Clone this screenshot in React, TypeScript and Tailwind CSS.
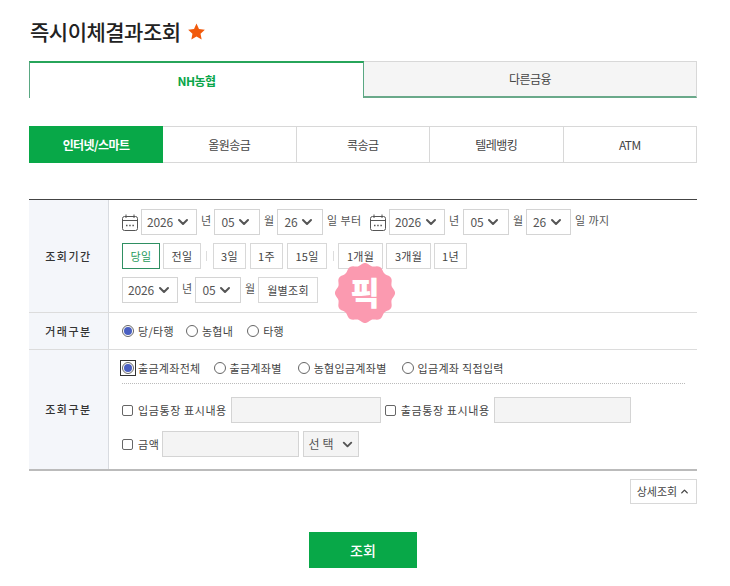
import { ChevronDown, ChevronUp } from "lucide-react";

const font = { fontFamily: '"Noto Sans CJK KR", "Noto Sans", sans-serif' };

function badgePath() {
  // scalloped sticker outline
  const pts: string[] = [];
  for (let i = 0; i < 120; i++) {
    const a = (i / 120) * Math.PI * 2;
    const r = 28.8 + 1.3 * Math.cos(a * 12);
    pts.push(`${(30 + r * Math.cos(a)).toFixed(2)},${(30 + r * Math.sin(a)).toFixed(2)}`);
  }
  return `M${pts.join("L")}Z`;
}

function Calendar() {
  return (
    <svg width="16" height="17" viewBox="0 0 16 17" fill="none" stroke="#555" strokeWidth="1" className="shrink-0">
      <rect x="0.5" y="2.5" width="15" height="14" rx="2" />
      <path d="M0.5 6.5H15.5M4 0.5V4M12 0.5V4" />
      <path d="M4 11.5H5.5M7.2 11.5H8.7M10.4 11.5H11.9" strokeWidth="1.3" />
    </svg>
  );
}

function Select({ value, w }: { value: string; w: string }) {
  return (
    <div className={`${w} h-[26px] shrink-0 border border-[#d4d4d4] flex items-center justify-center gap-[2px] text-[12px] text-[#555] tracking-[-0.2px]`}>
      <span>{value}</span>
      <ChevronDown size={16} strokeWidth={3} className="text-[#555]" />
    </div>
  );
}

function Unit({ children, w }: { children: string; w: string }) {
  return <span className={`${w} shrink-0 pl-[4px] text-left text-[11px] text-[#555] tracking-[0.4px] -mt-[3px]`}>{children}</span>;
}

function Btn({ children, w, on }: { children: string; w: string; on?: boolean }) {
  return (
    <div
      className={`${w} h-[26px] shrink-0 flex items-center justify-center border text-[11px] tracking-[0.3px] ${
        on ? "border-[#2f8f62] text-[#1f9a5c]" : "border-[#d8d8d8] text-[#444]"
      }`}
    >
      {children}
    </div>
  );
}

function Sep() {
  return <div className="w-px h-[10px] bg-[#ddd] shrink-0" />;
}

function Radio({ label, on, focus, ml }: { label: string; on?: boolean; focus?: boolean; ml?: string }) {
  return (
    <div className={`flex items-center ${ml ?? ""}`}>
      <div className={`w-[16px] h-[16px] flex items-center justify-center shrink-0 -mx-[2px] ${focus ? "border border-[#333]" : ""}`}>
        <div className="w-[12px] h-[12px] rounded-full border border-[#666] bg-white flex items-center justify-center">
          {on && <div className="w-[8px] h-[8px] rounded-full bg-[#4a5fc1]" />}
        </div>
      </div>
      <span className="ml-[4px] text-[11px] text-[#444] tracking-[0.3px] whitespace-nowrap">{label}</span>
    </div>
  );
}

function Check({ label, ml }: { label: string; ml?: string }) {
  return (
    <div className={`flex items-center shrink-0 ${ml ?? ""}`}>
      <div className="w-[11px] h-[11px] rounded-[2px] border border-[#666] bg-white shrink-0" />
      <span className="ml-[5px] text-[11px] text-[#444] tracking-[0.6px] whitespace-nowrap">{label}</span>
    </div>
  );
}

function Field({ w, ml }: { w: string; ml: string }) {
  return <div className={`${w} ${ml} h-[26px] shrink-0 border border-[#d4d4d4] bg-[#f4f4f4]`} />;
}

function RowHead({ children }: { children: string }) {
  return (
    <div className="w-[80px] shrink-0 bg-[#f4f6fa] border-r border-[#d8dbe0] flex items-center justify-center text-[11px] font-medium text-[#333] tracking-[1.5px]">
      {children}
    </div>
  );
}

export default function App() {
  const subTabs = ["올원송금", "콕송금", "텔레뱅킹", "ATM"];

  return (
    <div className="w-[730px] h-[586px] bg-white pl-[29px] pr-[33px] overflow-hidden" style={font}>
      {/* title */}
      <div className="h-[61px] flex items-center pl-px gap-[7px] pt-[1px]">
        <h1 className="text-[21px] font-medium text-[#222] tracking-[-0.5px] leading-none">즉시이체결과조회</h1>
        <svg width="17" height="17" viewBox="0 0 24 24" fill="#f15a0c">
          <path d="M12 0.8l3.5 7.6 8.3 1-6.1 5.7 1.6 8.2L12 19.2l-7.3 4.1 1.6-8.2L0.2 9.4l8.3-1z" />
        </svg>
      </div>

      {/* bank tabs */}
      <div className="flex h-[37px] text-[12px]">
        <div className="w-[335px] border-t-2 border-x border-t-[#27a55a] border-x-[#5aa883] flex items-center justify-center font-bold text-[#0aa64a] tracking-[-0.6px]">
          NH농협
        </div>
        <div className="flex-1 bg-[#f5f5f5] border-t border-r border-[#d8d8d8] border-b-2 border-b-[#6aa98a] flex items-center justify-center text-[#444] tracking-[-0.6px]">
          다른금융
        </div>
      </div>

      {/* transfer type tabs */}
      <div className="flex h-[37px] mt-[28px] text-[12px] tracking-[-0.6px] border-y border-r border-[#d8d8d8]">
        <div className="w-[134px] -my-px bg-[#08a848] flex items-center justify-center font-bold text-white">인터넷/스마트</div>
        {subTabs.map((t, i) => (
          <div key={t} className={`flex-1 flex items-center justify-center text-[#444] ${i > 0 ? "border-l border-[#d8d8d8]" : ""}`}>
            {t}
          </div>
        ))}
      </div>

      {/* search table */}
      <div className="mt-[36px] border-t border-[#444] border-b-2 border-b-[#bbb]">
        <div className="flex h-[113px] border-b border-[#dcdcdc]">
          <RowHead>조회기간</RowHead>
          <div className="relative flex-1 pl-[13px] pt-[9px] flex flex-col gap-[8px]">
            <div className="flex items-center h-[26px]">
              <Calendar />
              <div className="w-[3px]" />
              <Select value="2026" w="w-[56px]" />
              <Unit w="w-[17px]">년</Unit>
              <Select value="05" w="w-[46px]" />
              <Unit w="w-[17px]">월</Unit>
              <Select value="26" w="w-[46px]" />
              <Unit w="w-[47px]">일 부터</Unit>
              <Calendar />
              <div className="w-[3px]" />
              <Select value="2026" w="w-[56px]" />
              <Unit w="w-[18px]">년</Unit>
              <Select value="05" w="w-[46px]" />
              <Unit w="w-[17px]">월</Unit>
              <Select value="26" w="w-[45px]" />
              <Unit w="w-[44px]">일 까지</Unit>
            </div>
            <div className="flex items-center h-[26px]">
              <Btn w="w-[38px]" on>당일</Btn>
              <div className="w-[3px]" />
              <Btn w="w-[38px]">전일</Btn>
              <div className="w-[5px]" />
              <Sep />
              <div className="w-[6px]" />
              <Btn w="w-[33px]">3일</Btn>
              <div className="w-[4px]" />
              <Btn w="w-[33px]">1주</Btn>
              <div className="w-[4px]" />
              <Btn w="w-[40px]">15일</Btn>
              <div className="w-[6px]" />
              <Sep />
              <div className="w-[4px]" />
              <Btn w="w-[45px]">1개월</Btn>
              <div className="w-[3px]" />
              <Btn w="w-[45px]">3개월</Btn>
              <div className="w-[3px]" />
              <Btn w="w-[33px]">1년</Btn>
            </div>
            <div className="flex items-center h-[26px]">
              <Select value="2026" w="w-[56px]" />
              <Unit w="w-[17px]">년</Unit>
              <Select value="05" w="w-[46px]" />
              <Unit w="w-[17px]">월</Unit>
              <Btn w="w-[60px]">월별조회</Btn>
            </div>
            {/* sticker */}
            <div className="absolute left-[226px] top-[63px] w-[60px] h-[60px] flex items-center justify-center">
              <svg width="60" height="60" viewBox="0 0 60 60" className="absolute inset-0">
                <path d={badgePath()} fill="#fb9ab0" />
              </svg>
              <span className="relative -top-[2px] text-[32px] font-black text-white leading-none">픽</span>
            </div>
          </div>
        </div>

        <div className="flex h-[37px] border-b border-[#dcdcdc]">
          <RowHead>거래구분</RowHead>
          <div className="flex-1 pl-[13px] flex items-center">
            <Radio label="당/타행" on />
            <Radio label="농협내" ml="ml-[12px]" />
            <Radio label="타행" ml="ml-[14px]" />
          </div>
        </div>

        <div className="flex h-[119px]">
          <RowHead>조회구분</RowHead>
          <div className="flex-1 pl-[13px] pr-[12px]">
            <div className="flex items-center h-[34px] pt-[3px] border-b border-dotted border-[#bbb]">
              <Radio label="출금계좌전체" on focus />
              <Radio label="출금계좌별" ml="ml-[13px]" />
              <Radio label="농협입금계좌별" ml="ml-[16px]" />
              <Radio label="입금계좌 직접입력" ml="ml-[15px]" />
            </div>
            <div className="flex items-center h-[26px] mt-[13px]">
              <Check label="입금통장 표시내용" />
              <Field w="w-[150px]" ml="ml-[4px]" />
              <Check label="출금통장 표시내용" ml="ml-[4px]" />
              <Field w="w-[137px]" ml="ml-[4px]" />
            </div>
            <div className="flex items-center h-[26px] mt-[8px]">
              <Check label="금액" />
              <Field w="w-[137px]" ml="ml-[3px]" />
              <div className="w-[56px] h-[26px] ml-[4px] bg-[#f4f4f4] border border-[#d4d4d4] flex items-center justify-center gap-[3px] text-[12px] text-[#555] tracking-[3px]">
                <span>선택</span>
                <ChevronDown size={15} strokeWidth={3} />
              </div>
            </div>
          </div>
        </div>
      </div>

      {/* detail toggle */}
      <div className="flex justify-end mt-[8px]">
        <div className="w-[67px] h-[25px] border border-[#d8d8d8] flex items-center justify-center gap-[2px] text-[11px] text-[#444]">
          <span>상세조회</span>
          <ChevronUp size={11} strokeWidth={3} />
        </div>
      </div>

      {/* submit */}
      <div className="flex justify-center mt-[28px]">
        <div className="w-[108px] h-[36px] bg-[#08a848] flex items-center justify-center text-white text-[14px] font-medium">조회</div>
      </div>
    </div>
  );
}
